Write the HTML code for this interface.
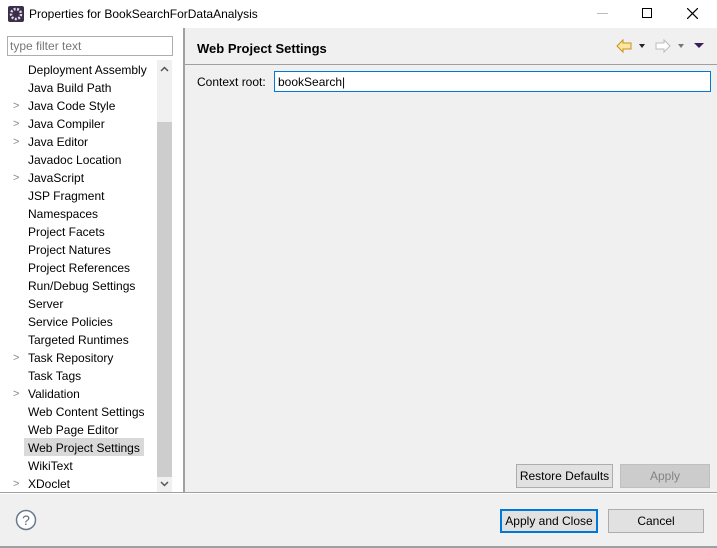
<!DOCTYPE html>
<html><head><style>
*{margin:0;padding:0;box-sizing:border-box}
body{width:717px;height:548px;background:#f0f0f0;font-family:"Liberation Sans","Noto Sans CJK KR",sans-serif;font-size:12px;color:#000;position:relative;overflow:hidden}
.a{position:absolute}
.it{position:absolute;left:28px;height:18px;line-height:20px;white-space:nowrap}
.ch{position:absolute;left:13px;color:#888;font-size:11px;line-height:20px}
.btn{position:absolute;border:1px solid #adadad;background:#e1e1e1;text-align:center;line-height:22px}
</style></head><body>
<div class="a" style="left:0;top:0;width:717px;height:28px;background:#fff"></div>
<svg class="a" style="left:8px;top:6px" width="16" height="16"><rect x="0" y="0" width="16" height="16" rx="2" fill="#3c2d4f"/><circle cx="8" cy="8" r="5" fill="none" stroke="#ddd" stroke-width="2.5" stroke-dasharray="2 1.5"/><circle cx="8" cy="8" r="2.5" fill="#3c2d4f"/></svg>
<div class="a" style="left:29px;top:7px;font-size:12px">Properties for BookSearchForDataAnalysis</div>
<div class="a" style="left:597px;top:13px;width:11px;height:1px;background:#bbb"></div>
<div class="a" style="left:642px;top:8px;width:10px;height:10px;border:1px solid #000"></div>
<svg class="a" style="left:687px;top:8px" width="11" height="11"><path d="M0 0L11 11M11 0L0 11" stroke="#000" stroke-width="1.2"/></svg>

<div class="a" style="left:0;top:28px;width:183px;height:465px;background:#fff"></div>
<div class="a" style="left:7px;top:36px;width:166px;height:20px;border:1px solid #adadad;color:#777;padding-left:2px;line-height:19px">type filter text</div>
<div class="a" style="left:157px;top:60px;width:15px;height:432px;background:#f0f0f0"></div>
<div class="a" style="left:157px;top:122px;width:15px;height:355px;background:#cdcdcd"></div>
<svg class="a" style="left:160px;top:66px" width="9" height="6"><path d="M1 5L4.5 1.5L8 5" stroke="#555" stroke-width="1.5" fill="none"/></svg>
<svg class="a" style="left:160px;top:481px" width="9" height="6"><path d="M1 1L4.5 4.5L8 1" stroke="#555" stroke-width="1.5" fill="none"/></svg>
<div class="a" style="left:24px;top:438px;width:120px;height:18px;background:#d9d9d9"></div>
<div class="it" style="top:60px">Deployment Assembly</div>
<div class="it" style="top:78px">Java Build Path</div>
<div class="ch" style="top:96px">&gt;</div><div class="it" style="top:96px">Java Code Style</div>
<div class="ch" style="top:114px">&gt;</div><div class="it" style="top:114px">Java Compiler</div>
<div class="ch" style="top:132px">&gt;</div><div class="it" style="top:132px">Java Editor</div>
<div class="it" style="top:150px">Javadoc Location</div>
<div class="ch" style="top:168px">&gt;</div><div class="it" style="top:168px">JavaScript</div>
<div class="it" style="top:186px">JSP Fragment</div>
<div class="it" style="top:204px">Namespaces</div>
<div class="it" style="top:222px">Project Facets</div>
<div class="it" style="top:240px">Project Natures</div>
<div class="it" style="top:258px">Project References</div>
<div class="it" style="top:276px">Run/Debug Settings</div>
<div class="it" style="top:294px">Server</div>
<div class="it" style="top:312px">Service Policies</div>
<div class="it" style="top:330px">Targeted Runtimes</div>
<div class="ch" style="top:348px">&gt;</div><div class="it" style="top:348px">Task Repository</div>
<div class="it" style="top:366px">Task Tags</div>
<div class="ch" style="top:384px">&gt;</div><div class="it" style="top:384px">Validation</div>
<div class="it" style="top:402px">Web Content Settings</div>
<div class="it" style="top:420px">Web Page Editor</div>
<div class="it" style="top:438px">Web Project Settings</div>
<div class="it" style="top:456px">WikiText</div>
<div class="ch" style="top:474px">&gt;</div><div class="it" style="top:474px">XDoclet</div>

<div class="a" style="left:183px;top:28px;width:2px;height:465px;background:#a0a0a0"></div>
<div class="a" style="left:185px;top:64px;width:532px;height:1px;background:#a0a0a0"></div>
<div class="a" style="left:197px;top:41px;font-weight:bold;font-size:13px">Web Project Settings</div>
<svg class="a" style="left:614px;top:38px" width="100" height="16">
<path d="M3 8 L9 2 L9 5 L17 5 L17 11 L9 11 L9 14 Z" fill="#fde7a0" stroke="#c8901a"/>
<path d="M25 6 L31 6 L28 10 Z" fill="#222"/>
<path d="M56 8 L50 2 L50 5 L42 5 L42 11 L50 11 L50 14 Z" fill="#fff" stroke="#bbb"/>
<path d="M64 6 L70 6 L67 10 Z" fill="#777"/>
<path d="M80 5 L90 5 L85 10 Z" fill="#3a1d5a"/>
</svg>
<div class="a" style="left:197px;top:75px">Context root:</div>
<div class="a" style="left:274px;top:71px;width:437px;height:21px;border:1px solid #0078d7;background:#fff;padding-left:3px;line-height:20px">bookSearch|</div>

<div class="btn" style="left:516px;top:464px;width:97px;height:24px">Restore Defaults</div>
<div class="btn" style="left:620px;top:464px;width:90px;height:24px;background:#ccc;border-color:#bfbfbf;color:#838383">Apply</div>
<div class="a" style="left:0;top:492px;width:717px;height:1px;background:#a0a0a0"></div>
<div class="a" style="left:0;top:493px;width:717px;height:1px;background:#fff"></div>
<svg class="a" style="left:15px;top:509px" width="22" height="22"><circle cx="11" cy="11" r="9.5" fill="#fff" stroke="#6a7a8c" stroke-width="1.5"/><text x="11" y="16" text-anchor="middle" font-size="14" font-family="Liberation Sans" fill="#5a6a7c">?</text></svg>
<div class="btn" style="left:500px;top:509px;width:98px;height:24px;border:2px solid #0078d7;line-height:21px">Apply and Close</div>
<div class="btn" style="left:608px;top:509px;width:96px;height:24px">Cancel</div>
<div class="a" style="left:0;top:546px;width:717px;height:2px;background:#a0a0a0"></div>
</body></html>
